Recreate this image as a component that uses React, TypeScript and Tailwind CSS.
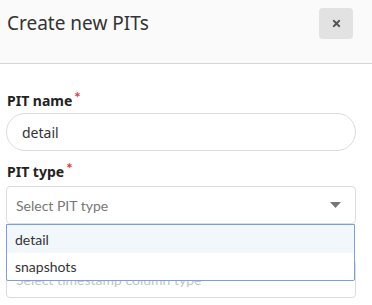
import { FaTimes } from "react-icons/fa";

const montserrat = { fontFamily: "'Noto Sans', 'Open Sans', sans-serif" };

function Label({ text }: { text: string }) {
  return (
    <div className="flex items-start h-[20px] mb-[2px] pl-[1px]">
      <span className="text-[14px] font-bold text-[#222] leading-[20px]" style={montserrat}>
        {text}
      </span>
      <span className="text-[15px] text-[#e53935] leading-[14px] ml-[2px] mt-[-1px] font-bold">*</span>
    </div>
  );
}

export default function App() {
  return (
    <div className="w-[372px] h-[305px] overflow-hidden bg-white" style={{ fontFamily: "Lato, sans-serif" }}>
      {/* Header */}
      <div className="h-[64px] bg-[#fafafa] border-b border-[#d6d6d6] flex items-start justify-between pl-[7px] pr-[19px] pt-[8px]">
        <h2 className="text-[19px] text-[#333] leading-[31px] font-normal" style={montserrat}>
          Create new PITs
        </h2>
        <button className="w-[34px] h-[31px] rounded-[4px] bg-[#e2e2e2] flex items-center justify-center text-[#555]">
          <FaTimes className="w-[11px] h-[11px]" />
        </button>
      </div>

      {/* Form */}
      <div className="px-[6px] pt-[27px] pr-[16px]">
        <Label text="PIT name" />
        <div className="h-[38px] rounded-full border border-[#dcdcdc] flex items-center pl-[15px] text-[14px] text-[#333]" style={montserrat}>
          detail
        </div>

        <div className="mt-[11px]">
          <Label text="PIT type" />
        </div>
        <div className="relative mt-[4px]">
          <div className="h-[38px] rounded-[4px] border border-[#dcdcdc] flex items-center justify-between pl-[9px] pr-[14px] text-[14px] text-[#777]">
            <span>Select PIT type</span>
            <svg width="11" height="6" viewBox="0 0 11 6">
              <path d="M0 0 H11 L5.5 6 Z" fill="#777" />
            </svg>
          </div>

          {/* Dropdown menu */}
          <div className="absolute left-0 right-[1px] top-[38px] z-10 bg-white border border-[#7a9fdc] rounded-b-[2px]">
            <div className="h-[28px] flex items-center pl-[8px] bg-[#f2f7fc] text-[14px] text-[#333]">detail</div>
            <div className="h-[27px] flex items-center pl-[8px] text-[14px] text-[#333]">snapshots</div>
          </div>

          {/* Next field, mostly hidden */}
          <div className="mt-[36px] h-[38px] rounded-[4px] border border-[#dcdcdc] flex items-center pl-[9px] text-[14px] text-[#c4c4c4]">
            Select timestamp column type
          </div>
        </div>
      </div>
    </div>
  );
}
